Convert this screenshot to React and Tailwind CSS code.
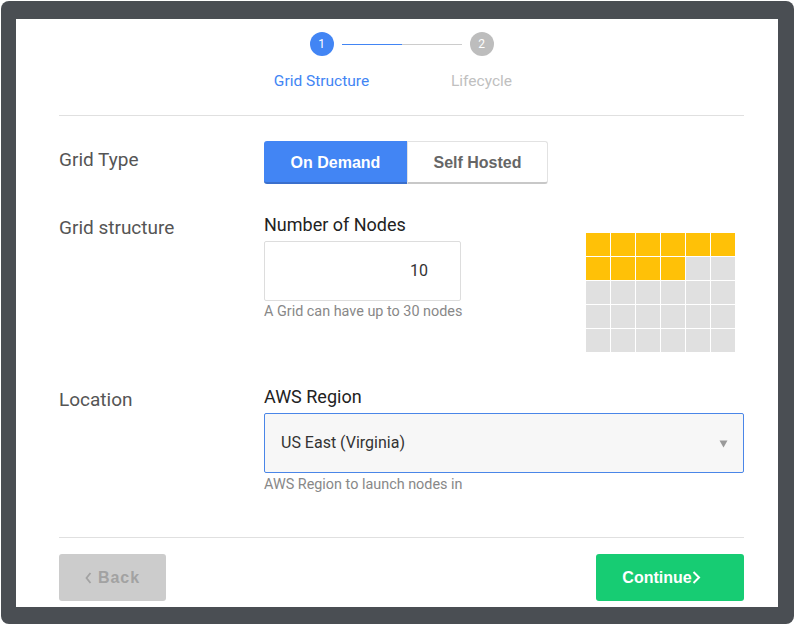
import React from "react";

const F = { fontFamily: "Roboto, 'Noto Sans', sans-serif" };
const ARIAL = { fontFamily: "'Liberation Sans', Arial, sans-serif" };

function NodeGrid({ total = 30, filled = 10 }) {
  const cells = Array.from({ length: total }, (_, i) => i < filled);
  return (
    <div className="grid grid-cols-[repeat(6,24px)] gap-px">
      {cells.map((on, i) => (
        <div key={i} className={on ? "h-[23px] w-[24px] bg-[#ffc107]" : "h-[23px] w-[24px] bg-[#e0e0e0]"} />
      ))}
    </div>
  );
}

export default function App() {
  return (
    <div className="w-[796px] h-[626px] bg-white overflow-hidden" style={F}>
      <div className="ml-px mt-px w-[793px] h-[623px] rounded-[8px] bg-[#4a4e53] pt-[18px] pl-[15px]">
        <div className="w-[762px] h-[588px] bg-white pl-[43px] pr-[34px] flex flex-col">
          {/* Stepper */}
          <div className="pt-[13px] flex items-center justify-center">
            <div className="w-6 h-6 rounded-full bg-[#4285f4] text-white text-[12px] flex items-center justify-center">1</div>
            <div className="mx-2 w-[120px] h-px flex">
              <div className="w-[60px] bg-[#4285f4]" />
              <div className="w-[60px] bg-[#cccccc]" />
            </div>
            <div className="w-6 h-6 rounded-full bg-[#bdbdbd] text-white text-[12px] flex items-center justify-center">2</div>
          </div>
          <div className="mt-[16px] flex justify-center text-[15.5px] leading-[18px]">
            <div className="w-[160px] text-center text-[#4285f4]">Grid Structure</div>
            <div className="w-[160px] text-center text-[#c0c0c0]">Lifecycle</div>
          </div>
          <div className="mt-[25px] h-px bg-[#e0e0e0]" />

          {/* Grid Type */}
          <div className="mt-[25px] flex items-start">
            <div className="w-[205px] pt-[8px] text-[19px] leading-[22px] text-[#555]">Grid Type</div>
            <div className="flex h-[43px]" style={ARIAL}>
              <div className="w-[143px] flex items-center justify-center bg-[#4285f4] border-b-2 border-[#3a6fcc] rounded-l-[3px] text-white font-bold text-[16px] pt-[2px]">On Demand</div>
              <div className="w-[141px] flex items-center justify-center bg-white border border-[#e2e2e2] border-b-2 border-b-[#c8c8c8] rounded-r-[3px] text-[#666] font-bold text-[16px] pt-[1px]">Self Hosted</div>
            </div>
          </div>

          {/* Grid structure */}
          <div className="mt-[31px] flex items-start">
            <div className="w-[205px] pt-[2px] text-[19px] leading-[22px] text-[#555]">Grid structure</div>
            <div className="w-[197px] flex flex-col">
              <div className="text-[18px] leading-[20px] text-[#222]">Number of Nodes</div>
              <div className="mt-[6px] h-[60px] border border-[#dddddd] rounded-[2px] flex items-center justify-end pr-[32px] text-[16px] text-[#333]">10</div>
              <div className="mt-[3px] text-[14.4px] leading-[16px] text-[#888] whitespace-nowrap">A Grid can have up to 30 nodes</div>
            </div>
            <div className="ml-[125px] mt-[18px]">
              <NodeGrid />
            </div>
          </div>

          {/* Location */}
          <div className="mt-[35px] flex items-start">
            <div className="w-[205px] pt-[2px] text-[19px] leading-[22px] text-[#555]">Location</div>
            <div className="flex-1 flex flex-col">
              <div className="text-[18px] leading-[20px] text-[#222]">AWS Region</div>
              <div className="mt-[6px] h-[60px] bg-[#f7f7f7] border border-[#4a86e8] rounded-[2px] flex items-center justify-between pl-[16px] pr-[15px] text-[16px] text-[#333]">
                <span>US East (Virginia)</span>
                <svg width="9" height="8" viewBox="0 0 9 8" className="mt-[2px]">
                  <path d="M0.5 0.5 H8.5 L4.5 7.5 Z" fill="#9a9a9a" />
                </svg>
              </div>
              <div className="mt-[4px] text-[14.4px] leading-[16px] text-[#888] whitespace-nowrap">AWS Region to launch nodes in</div>
            </div>
          </div>

          <div className="mt-[44px] h-px bg-[#e0e0e0]" />

          {/* Footer buttons */}
          <div className="mt-[16px] flex justify-between" style={ARIAL}>
            <div className="w-[107px] h-[47px] rounded-[3px] bg-[#cccccc] text-[#a2a2a2] font-bold text-[16px] tracking-[1px] flex items-center justify-center">
              <svg width="7" height="12" viewBox="0 0 7 12" className="mr-[6px]">
                <path d="M5.5 1 L1.5 6 L5.5 11" fill="none" stroke="#a2a2a2" strokeWidth="1.8" />
              </svg>
              <span>Back</span>
            </div>
            <div className="w-[148px] h-[47px] rounded-[3px] bg-[#17cc73] text-white font-bold text-[16px] flex items-center justify-center pr-[17px]">
              <span>Continue</span>
              <svg width="9" height="13" viewBox="0 0 9 13">
                <path d="M1.5 1 L7 6.5 L1.5 12" fill="none" stroke="#ffffff" strokeWidth="2" />
              </svg>
            </div>
          </div>
        </div>
      </div>
    </div>
  );
}
